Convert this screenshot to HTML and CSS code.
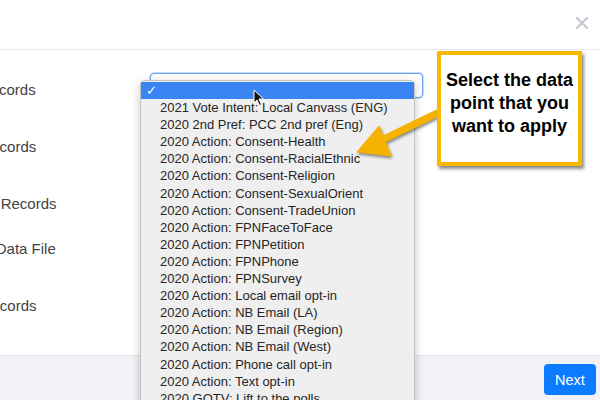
FILE: index.html
```html
<!DOCTYPE html>
<html lang="en">
<head>
    <meta charset="UTF-8">
    <title>Import Wizard</title>
    <link rel="stylesheet" href="styles.css">
</head>
<body>
    <div class="modal">
        <div class="modal_head">
            <svg class="close" width="12" height="12" viewBox="0 0 12 12">
                <path d="M1 1L11 11M11 1L1 11" stroke="#c6cbd3" stroke-width="2.4" stroke-linecap="round"/>
            </svg>
        </div>
        <div class="modal_body">
            <div class="row row_first">
                <div class="label">Total Records</div>
                <div class="field"><div class="select"></div></div>
            </div>
            <div class="row">
                <div class="label">Valid Records</div>
            </div>
            <div class="row">
                <div class="label">Existing Records</div>
            </div>
            <div class="row row_tight">
                <div class="label">Upload Data File</div>
            </div>
            <div class="row">
                <div class="label">Final Records</div>
            </div>
        </div>
        <div class="modal_foot">
            <button class="btn_next">Next</button>
        </div>
    </div>

    <!-- 下拉菜单 -->
    <ul class="dropdown">
        <li class="selected"><span class="check">&#10003;</span></li>
        <li>2021 Vote Intent: Local Canvass (ENG)</li>
        <li>2020 2nd Pref: PCC 2nd pref (Eng)</li>
        <li>2020 Action: Consent-Health</li>
        <li>2020 Action: Consent-RacialEthnic</li>
        <li>2020 Action: Consent-Religion</li>
        <li>2020 Action: Consent-SexualOrient</li>
        <li>2020 Action: Consent-TradeUnion</li>
        <li>2020 Action: FPNFaceToFace</li>
        <li>2020 Action: FPNPetition</li>
        <li>2020 Action: FPNPhone</li>
        <li>2020 Action: FPNSurvey</li>
        <li>2020 Action: Local email opt-in</li>
        <li>2020 Action: NB Email (LA)</li>
        <li>2020 Action: NB Email (Region)</li>
        <li>2020 Action: NB Email (West)</li>
        <li>2020 Action: Phone call opt-in</li>
        <li>2020 Action: Text opt-in</li>
        <li>2020 GOTV: Lift to the polls</li>
    </ul>

    <!-- 鼠标指针 -->
    <svg class="cursor" width="12" height="18" viewBox="0 0 12 18">
        <path d="M1 1L1 14L4 11L6.5 16.5L8.5 15.5L6 10L10.5 10Z" fill="#111" stroke="#fff" stroke-width="1"/>
    </svg>

    <!-- 提示箭头 -->
    <svg class="arrow" width="110" height="70" viewBox="350 100 110 70">
        <g fill="#f6b200" stroke="#f6b200" style="filter: drop-shadow(1px 2px 1.5px rgba(0,0,0,.45))">
            <line x1="450" y1="107" x2="380" y2="141" stroke-width="7.5" stroke-linecap="round"/>
            <polygon points="357,152 379,126 391,156" stroke-width="1" stroke-linejoin="round"/>
        </g>
    </svg>

    <div class="callout">
        Select the data point that you want to apply
    </div>
</body>
</html>
```

FILE: styles.css
```css
body,ul{
    margin: 0;
    padding: 0;
}
body{
    width: 600px;
    height: 400px;
    overflow: hidden;
    background-color: #fff;
    font-family: "Liberation Sans", Arial, sans-serif;
    position: relative;
}
.modal{
    margin-left: -56px;
    width: 656px;
    height: 400px;
    display: flex;
    flex-direction: column;
}
.modal_head{
    height: 50px;
    border-bottom: 1px solid #e6e9ee;
    display: flex;
    justify-content: flex-end;
    align-items: center;
    padding-right: 12px;
    box-sizing: border-box;
}
.close{
    margin-top: -4px;
}
.modal_body{
    flex: 1;
    padding-top: 27px;
}
.row{
    display: flex;
    align-items: center;
    height: 25px;
    margin-top: 32px;
}
.row_first{
    margin-top: 0;
}
.row_tight{
    margin-top: 20px;
}
.label{
    width: 206px;
    font-size: 15px;
    line-height: 25px;
    color: #434343;
    white-space: nowrap;
}
.field{
    width: 273px;
    align-self: flex-start;
}
.select{
    height: 25px;
    margin-top: -4px;
    box-sizing: border-box;
    border: 1px solid #6aa5f6;
    border-radius: 4px;
    box-shadow: 0 0 0 1px rgba(90,150,245,.35);
    background-color: #fff;
}
.modal_foot{
    height: 45px;
    box-sizing: border-box;
    border-top: 1px solid #e3e6eb;
    background-color: #f1f2f6;
    display: flex;
    justify-content: flex-end;
    align-items: flex-start;
    padding: 8px 4px 0 0;
}
.btn_next{
    width: 52px;
    height: 31px;
    border: none;
    border-radius: 4px;
    background-color: #0b7cff;
    color: #fff;
    font-family: "Liberation Sans", Arial, sans-serif;
    font-size: 14.5px;
    padding: 0;
}
.dropdown{
    list-style: none;
    position: absolute;
    left: 140px;
    top: 80px;
    width: 275px;
    height: 340px;
    box-sizing: border-box;
    padding-top: 1px;
    background-color: #efefef;
    border: 1px solid #c4c4c4;
    border-radius: 5px 5px 0 0;
    box-shadow: 0 3px 10px rgba(0,0,0,.22);
}
.dropdown li{
    height: 17.1px;
    line-height: 17px;
    padding-left: 19px;
    font-size: 13px;
    color: #262626;
    white-space: nowrap;
    position: relative;
}
.dropdown .selected{
    background-color: #3a84f4;
}
.check{
    position: absolute;
    left: 5px;
    top: 0;
    color: #fff;
    font-family: "DejaVu Sans", sans-serif;
    font-weight: bold;
    font-size: 13px;
}
.cursor{
    position: absolute;
    left: 253px;
    top: 89px;
}
.arrow{
    position: absolute;
    left: 350px;
    top: 100px;
}
.callout{
    position: absolute;
    left: 437px;
    top: 51px;
    width: 145px;
    height: 115px;
    box-sizing: border-box;
    border: 4px solid #f8b700;
    background-color: #fff;
    box-shadow: 2px 3px 3px rgba(0,0,0,.45);
    padding: 14px 0 0;
    font-family: "Liberation Sans", Arial, sans-serif;
    font-weight: bold;
    font-size: 18px;
    line-height: 23px;
    text-align: center;
    color: #000;
}
```
